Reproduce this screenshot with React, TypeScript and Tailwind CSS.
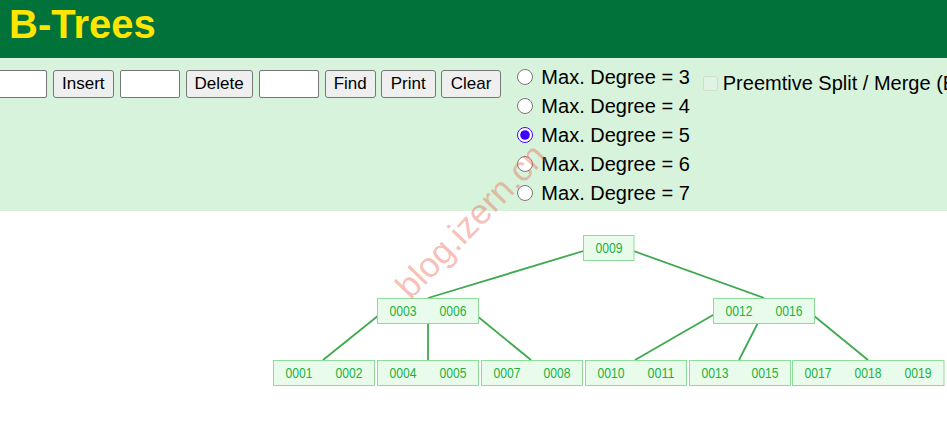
import { useState } from 'react';

type TreeNode = { x: number; y: number; keys: string[] };

const nodes: TreeNode[] = [
  { x: 583, y: 24, keys: ['0009'] },
  { x: 377, y: 87, keys: ['0003', '0006'] },
  { x: 713, y: 87, keys: ['0012', '0016'] },
  { x: 273, y: 149, keys: ['0001', '0002'] },
  { x: 377, y: 149, keys: ['0004', '0005'] },
  { x: 481, y: 149, keys: ['0007', '0008'] },
  { x: 585, y: 149, keys: ['0010', '0011'] },
  { x: 689, y: 149, keys: ['0013', '0015'] },
  { x: 792, y: 149, keys: ['0017', '0018', '0019'] },
];

// [x1, y1, x2, y2], relative to the canvas top
const edges = [
  [590, 38, 428, 87],
  [628, 38, 764, 87],
  [384, 100, 323, 149],
  [428, 100, 428, 149],
  [471, 100, 531, 149],
  [720, 100, 635, 149],
  [764, 100, 739, 149],
  [808, 100, 868, 149],
];

const degrees = [3, 4, 5, 6, 7];

export default function App() {
  const [degree, setDegree] = useState(5);

  return (
    <div className="relative w-[947px] h-[443px] overflow-hidden bg-white font-['Liberation_Sans',Arial,sans-serif]">
      <div className="h-[58px] bg-[#00723a] px-[9px] pt-[4px]">
        <h1 className="text-[40px] leading-none font-bold text-[#ffe500]">B-Trees</h1>
      </div>

      <div className="h-[153px] bg-[#d8f3dc] flex items-start">
        <div className="shrink-0 flex items-center gap-[6px] ml-[-13px] mt-[12px] text-[17px] text-black whitespace-nowrap">
          <input type="text" className="w-[60px] h-[28px] bg-white border border-[#767676] rounded-[2px]" />
          <button className="h-[28px] px-[8px] bg-[#efefef] border border-[#767676] rounded-[3px]">Insert</button>
          <input type="text" className="w-[60px] h-[28px] bg-white border border-[#767676] rounded-[2px]" />
          <button className="h-[28px] px-[8px] bg-[#efefef] border border-[#767676] rounded-[3px]">Delete</button>
          <input type="text" className="w-[60px] h-[28px] bg-white border border-[#767676] rounded-[2px]" />
          <button className="h-[28px] px-[8px] bg-[#efefef] border border-[#767676] rounded-[3px]">Find</button>
          <button className="h-[28px] px-[9px] bg-[#efefef] border border-[#767676] rounded-[3px] ml-[-1px]">Print</button>
          <button className="h-[28px] px-[9px] bg-[#efefef] border border-[#767676] rounded-[3px] ml-[-1px]">Clear</button>
        </div>

        <div className="shrink-0 ml-[16px] mt-[4px] flex flex-col text-[20px] text-black whitespace-nowrap">
          {degrees.map((d) => (
            <label key={d} className="h-[29px] flex items-center gap-[8px]">
              <input
                type="radio"
                name="degree"
                checked={degree === d}
                onChange={() => setDegree(d)}
                className="w-4 h-4 m-0 accent-[#3d00ff]"
              />
              <span>Max. Degree = {d}</span>
            </label>
          ))}
        </div>

        <label className="shrink-0 ml-[13px] mt-[10px] flex items-center gap-[5px] text-[20px] text-black whitespace-nowrap">
          <input type="checkbox" disabled className="w-[15px] h-[15px] m-0 opacity-50" />
          <span>Preemtive Split / Merge (Even max degree only)</span>
        </label>
      </div>

      <svg width="947" height="232" className="block">
        {edges.map(([x1, y1, x2, y2], i) => (
          <line key={i} x1={x1} y1={y1} x2={x2} y2={y2} stroke="#3fa950" strokeWidth="1.8" />
        ))}
        {nodes.map((n, i) => (
          <g key={i}>
            <rect
              x={n.x + 0.5}
              y={n.y + 0.5}
              width={n.keys.length * 50.5}
              height={25}
              fill="#e9fbeb"
              stroke="#8edc9c"
              strokeWidth="1"
            />
            {n.keys.map((k, j) => (
              <text
                key={k}
                x={n.x + 26 + j * 50}
                y={n.y + 18}
                textAnchor="middle"
                fontSize="15"
                fill="#22b140"
                textLength="27"
                lengthAdjust="spacingAndGlyphs"
                fontFamily="'Liberation Sans', Arial, sans-serif"
              >
                {k}
              </text>
            ))}
          </g>
        ))}
      </svg>

      <div className="absolute left-[471px] top-[221px] -translate-x-1/2 -translate-y-1/2 -rotate-[46deg] text-[35px] text-[#ea5a45]/40 whitespace-nowrap pointer-events-none">
        blog.izern.cn
      </div>
    </div>
  );
}
